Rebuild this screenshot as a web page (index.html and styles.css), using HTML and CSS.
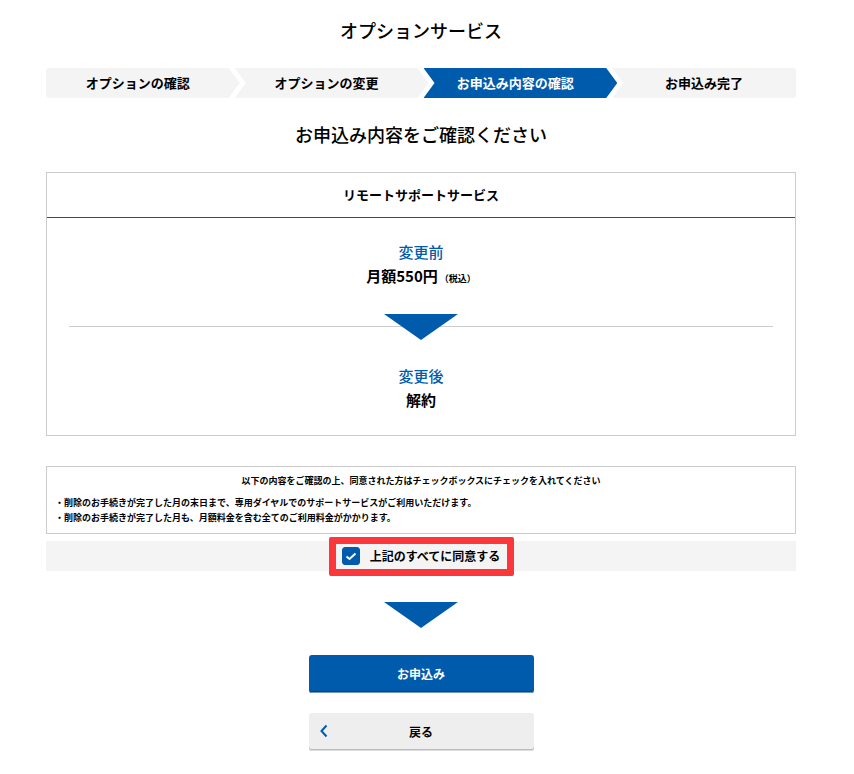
FILE: index.html
```html
<!DOCTYPE html>
<html lang="ja">
<head>
<meta charset="utf-8">
<title>オプションサービス</title>
<meta name="viewport" content="width=device-width, initial-scale=1">
<link rel="stylesheet" href="styles.css">
</head>
<body>
<main class="page">
  <h1 class="title">オプションサービス</h1>

  <ol class="steps">
    <li class="step"><span>オプションの確認</span></li>
    <li class="step"><span>オプションの変更</span></li>
    <li class="step step-current" aria-current="step"><span>お申込み内容の確認</span></li>
    <li class="step"><span>お申込み完了</span></li>
  </ol>

  <h2 class="title">お申込み内容をご確認ください</h2>

  <section class="card">
    <h3 class="card-head">リモートサポートサービス</h3>
    <div class="card-body">
      <div class="change">
        <p class="change-label">変更前</p>
        <p class="change-value">月額550円<small> （税込）</small></p>
      </div>
      <div class="divider"><svg class="arrow" viewBox="0 0 74 26" aria-hidden="true"><path d="M0 0H74L37 26Z"/></svg></div>
      <div class="change">
        <p class="change-label">変更後</p>
        <p class="change-value">解約</p>
      </div>
    </div>
  </section>

  <form class="confirm">
    <div class="notice">
      <p class="notice-lead">以下の内容をご確認の上、同意された方はチェックボックスにチェックを入れてください</p>
      <p>・削除のお手続きが完了した月の末日まで、専用ダイヤルでのサポートサービスがご利用いただけます。</p>
      <p>・削除のお手続きが完了した月も、月額料金を含む全てのご利用料金がかかります。</p>
    </div>
    <div class="agree">
      <label class="agree-label" for="agree">
        <span class="check">
          <input type="checkbox" id="agree" checked>
          <svg viewBox="0 0 18 18" aria-hidden="true"><path d="M4.5 9.5L7.5 12L13.5 6.5"/></svg>
        </span>
        上記のすべてに同意する
      </label>
    </div>
    <svg class="arrow" viewBox="0 0 74 26" aria-hidden="true"><path d="M0 0H74L37 26Z"/></svg>
    <div class="actions">
      <button type="submit" class="button button-primary">お申込み</button>
      <button type="button" class="button button-back">
        <svg viewBox="0 0 8 14" aria-hidden="true"><path d="M6.5 1.5L1.5 7L6.5 12.5"/></svg>
        戻る
      </button>
    </div>
  </form>
</main>
</body>
</html>
```
FILE: styles.css
```css
:root {
  --blue: #005bac;
  --pale: #f4f4f4;
  --line: #ccc;
}

* {
  box-sizing: border-box;
}

body {
  margin: 0;
  padding: 16px 12px 24px 0;
  background: #fff;
  color: #000;
  font-family: "Noto Sans CJK JP", sans-serif;
  font-weight: 700;
}

h1, h2, h3, p, ol {
  margin: 0;
  padding: 0;
}

.page {
  max-width: 750px;
  margin: 0 auto;
}

.title {
  font-size: 18px;
  line-height: 28px;
  font-weight: 500;
  text-align: center;
}

.steps {
  display: grid;
  grid-template-columns: repeat(4, 1fr);
  gap: 5px;
  margin: 24px 0 22px;
  list-style: none;
}

.step {
  position: relative;
  font-size: 13px;
  line-height: 30px;
  text-align: center;
}

.step span {
  position: relative;
}

.step::before {
  content: "";
  position: absolute;
  inset: 0 -10px 0 0;
  background: var(--pale);
  clip-path: polygon(0 0, calc(100% - 11px) 0, 100% 50%, calc(100% - 11px) 100%, 0 100%, 11px 50%);
}

.step:first-child::before {
  border-radius: 3px 0 0 3px;
  clip-path: polygon(0 0, calc(100% - 11px) 0, 100% 50%, calc(100% - 11px) 100%, 0 100%);
}

.step:last-child::before {
  right: 0;
  border-radius: 0 3px 3px 0;
  clip-path: polygon(0 0, 100% 0, 100% 100%, 0 100%, 11px 50%);
}

.step-current {
  color: #fff;
}

.step-current::before {
  background: var(--blue);
}

.card {
  margin-top: 24px;
  border: 1px solid var(--line);
}

.card-head {
  border-bottom: 1px solid var(--blue);
  font-size: 13px;
  line-height: 44px;
  font-weight: 700;
  text-align: center;
}

.card-body {
  padding: 22px 22px 23px;
}

.change {
  font-size: 15px;
  line-height: 24px;
  text-align: center;
}

.change-label {
  color: var(--blue);
  font-weight: 500;
}

.change-value small {
  font-size: 9px;
}

.divider {
  display: flex;
  justify-content: center;
  margin: 23px 0 24px;
  background: linear-gradient(var(--line), var(--line)) 0 12px / 100% 1px no-repeat;
}

.arrow {
  display: block;
  width: 74px;
  height: 26px;
  fill: var(--blue);
}

.confirm {
  display: flex;
  flex-direction: column;
  align-items: center;
  margin-top: 30px;
}

.notice {
  align-self: stretch;
  padding: 6px 8px 8px;
  border: 1px solid var(--line);
  font-size: 9px;
  line-height: 15px;
}

.notice-lead {
  margin-bottom: 7px;
  text-align: center;
}

.agree {
  display: flex;
  justify-content: center;
  align-self: stretch;
  margin: 7px 0 31px;
  background: var(--pale);
}

.agree-label {
  position: relative;
  display: flex;
  align-items: center;
  gap: 10px;
  font-size: 12px;
  line-height: 30px;
}

.agree-label::after {
  content: "";
  position: absolute;
  inset: -4px -14px -5px -13px;
  border: 7px solid #fa383b;
  border-radius: 2px;
}

.check {
  display: grid;
}

.check input,
.check svg {
  grid-area: 1 / 1;
  width: 18px;
  height: 18px;
  margin: 0;
}

.check input {
  appearance: none;
  border: 1px solid var(--blue);
  border-radius: 3px;
  background: #fff;
}

.check input:checked {
  background: var(--blue);
}

.check svg {
  fill: none;
  stroke: #fff;
  stroke-width: 2;
  pointer-events: none;
}

.actions {
  display: grid;
  gap: 20px;
  width: 30%;
  min-width: 200px;
  margin-top: 27px;
}

.button {
  position: relative;
  height: 38px;
  padding: 0;
  border: 0;
  border-radius: 3px;
  font: 700 12px/36px "Noto Sans CJK JP", sans-serif;
}

.button-primary {
  background: var(--blue);
  color: #fff;
  box-shadow: inset 0 -1px #7898b4, inset 0 -2px #004380;
}

.button-back {
  background: #eee;
  color: #000;
  box-shadow: inset 0 -1px #ddd, inset 0 -2px #bbb;
}

.button-back svg {
  position: absolute;
  top: 11px;
  left: 11px;
  width: 8px;
  height: 14px;
  fill: none;
  stroke: var(--blue);
  stroke-width: 2;
}
```
